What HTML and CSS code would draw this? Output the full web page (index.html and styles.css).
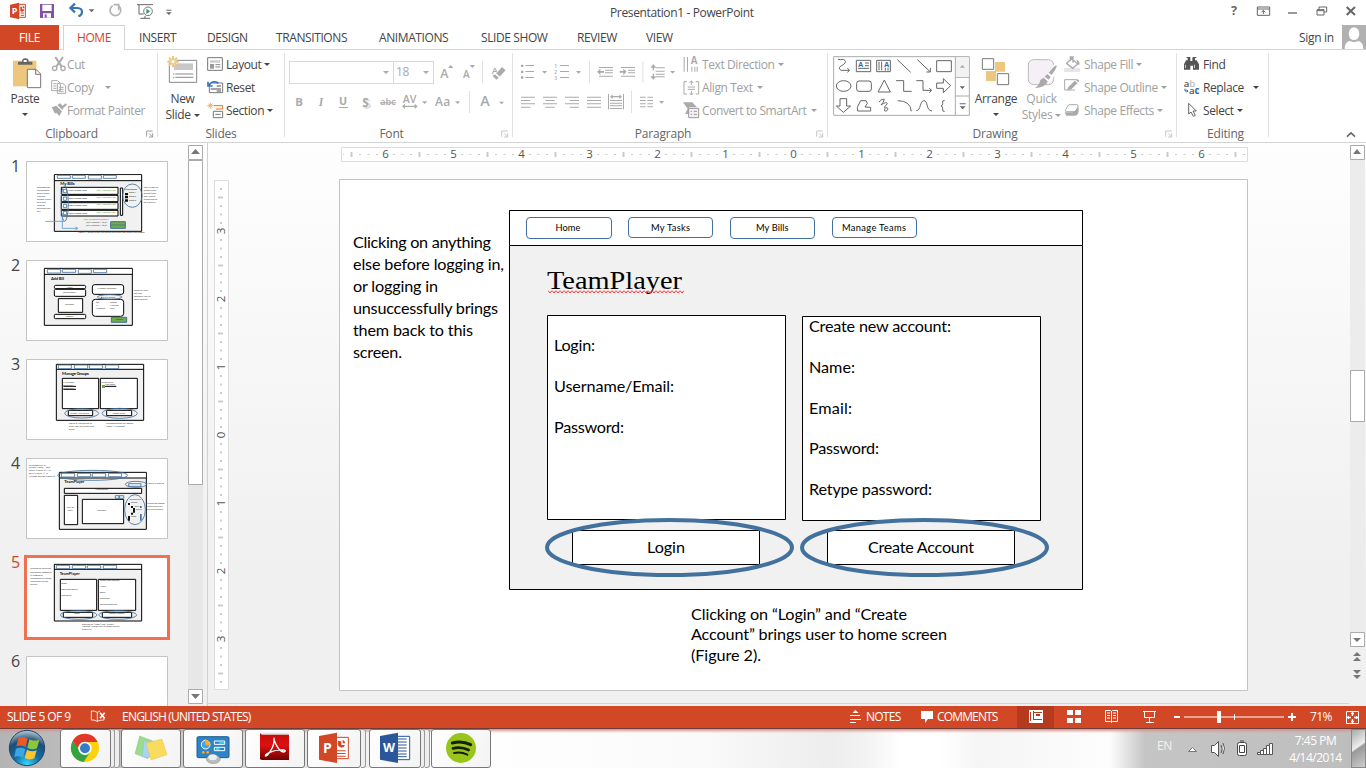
FILE: index.html
```html
<!DOCTYPE html>
<html lang="en">
<head>
<meta charset="utf-8">
<title>Presentation1 - PowerPoint</title>
<link rel="stylesheet" href="styles.css">
</head>
<body>
<div class="app">
<header class="titlebar">
  <div class="quick">
    <svg width="33" height="25" viewBox="0 0 99 75"><path fill="#d24726" d="M30 14l28-6v50l-28-6z"/><path fill="none" stroke="#d24726" stroke-width="3" d="M58 13h18v39H58M62 39h10M62 46h10"/><path fill="#d24726" d="M61 20h5v8h7a7 7 0 0 1-12 5zM68 17a8 8 0 0 1 6 8h-6z"/><text x="35" y="42" class="logo-letter" font-size="27">P</text></svg>
    <svg width="28" height="25" viewBox="99 0 84 75"><path fill="#8450a3" d="M120 12h42v42h-42z"/><path fill="#fff" d="M127 14h28v19h-28zM129 40h24v13h-24z"/><path fill="#8450a3" d="M134 43h6v10h-6z"/></svg>
    <svg width="38" height="25" viewBox="183 0 114 75"><path fill="none" stroke="#3b73b3" stroke-width="6.500" d="M225 11l-14 13 14 13M212 24h20q15 1 14 13q-1 9-11 12"/><path fill="#666" d="M266 28h17l-8 9z"/></svg>
    <svg width="30" height="25" viewBox="297 0 90 75"><path fill="none" stroke="#b3b3b3" stroke-width="5" d="M338 17a16 16 0 1 0 18 1"/><path fill="none" stroke="#b3b3b3" stroke-width="5" d="M341 14h15v17"/></svg>
    <svg width="32" height="25" viewBox="387 0 96 75"><path fill="none" stroke="#666" stroke-width="3" d="M411 14h48M417 14v28h14M435 48v7M421 55h29"/><circle cx="444" cy="34" r="13" fill="#fff" stroke="#777" stroke-width="3"/><path fill="#3b9b76" d="M439 26l12 8-12 8z"/></svg>
    <svg width="19" height="25" viewBox="483 0 57 75"><path fill="#666" d="M499 29h15v3h-15zM498 37h17l-8 8z"/></svg>
  </div>
  <h1 class="title">Presentation1 - PowerPoint</h1>
  <svg class="winbtns" width="156" height="25" viewBox="720 0 468 75"><text x="783" y="45" font-size="38" font-weight="700" fill="#666" font-family="Open Sans">?</text><g fill="none" stroke="#666" stroke-width="3"><path d="M862 21h37v25h-37zM862 27h37M880 42V31M874 37l6-6 6 6M1047 21h23v15h-23z"/><path fill="#fff" d="M1041 29h21v16h-21zM1041 32h21"/><path stroke-width="4" d="M954 39h27"/><path stroke-width="6" d="M1130 21l25 24M1155 21l-25 24"/></g></svg>
</header>
<nav class="tabs">
  <a class="tab file">FILE</a><a class="tab home">HOME</a><a class="tab t-ins">INSERT</a><a class="tab t-des">DESIGN</a><a class="tab t-tra">TRANSITIONS</a><a class="tab t-ani">ANIMATIONS</a><a class="tab t-sli">SLIDE SHOW</a><a class="tab t-rev">REVIEW</a><a class="tab">VIEW</a>
  <span class="signin">Sign in</span>
  <svg class="avatar" width="24" height="24" viewBox="0 0 72 72"><path fill="#b1b1b1" d="M0 0h72v72H0z"/><ellipse cx="36" cy="26" rx="16" ry="19" fill="#fff"/><path fill="#fff" d="M8 72q0-20 14-24l14 4 14-4q14 4 14 24z"/></svg>
</nav>
<section class="ribbon">
  <div class="group g-clip">
    <div class="tools">
      <div class="big paste"><svg width="50" height="37" viewBox="0 159 150 111"><path fill="#edc77d" d="M39 182h70v77H39z"/><path fill="#666" d="M54 194v-9h12q0-10 10-10t10 10h11v9z"/><path fill="#fff" d="M71 180h9v6h-9z"/><path fill="#fff" stroke="#777" stroke-width="3" d="M82 208h26l14 14v41H82zM107 208v15h15"/></svg><span>Paste</span><i class="caret"></i></div>
      <div class="col off">
        <div class="cmd"><svg width="18" height="23" viewBox="144 159 54 69"><g fill="none" stroke="#aaa" stroke-width="4"><circle cx="158" cy="205" r="6.500"/><circle cx="183" cy="205" r="6.500"/><path stroke-width="6" d="M160 171l19 29M183 171l-20 29"/></g></svg><span>Cut</span></div>
        <div class="cmd"><svg width="18" height="23" viewBox="144 228 54 69"><path fill="#fff" stroke="#aaa" stroke-width="3" d="M149 242h18l8 8v22h-26zM166 250h16l9 8v22h-25zM154 251h9M154 258h9M154 265h9M171 262h14M171 268h14M171 274h14"/></svg><span class="copy">Copy</span><i class="caret"></i></div>
        <div class="cmd"><svg width="18" height="23" viewBox="144 297 54 69"><path fill="#aaa" d="M149 322l14-5 17 17-8 14-9-10-4 3zM166 315l8-5 12 11-5 9zM182 317l9-7 4 5-9 7z"/></svg><span>Format Painter</span></div>
      </div>
    </div>
    <div class="glabel"><span>Clipboard</span><svg class="launch" width="8" height="8" viewBox="0 0 24 24"><path fill="none" stroke="#888" stroke-width="2.500" d="M2 20V3h18M9 10l10 10M20 10v11H9"/></svg></div>
  </div>
  <div class="group g-slides">
    <div class="tools">
      <div class="big"><svg width="49" height="37" viewBox="474 159 147 111"><path fill="#fff" stroke="#888" stroke-width="3" d="M508 181h82v66h-82z"/><path fill="#c9c9c9" d="M522 190h57v20h-57z"/><path stroke="#888" stroke-width="3" stroke-dasharray="4 3 60" d="M519 222h61M519 232h61"/><circle cx="519" cy="185" r="11" fill="#fff"/><path stroke="#edc77d" stroke-width="6" d="M519 168v34M502 185h34M507 173l24 24M531 173l-24 24"/><circle cx="519" cy="185" r="5" fill="#fff"/></svg><span>New<br>Slide <i class="caret"></i></span></div>
      <div class="col">
        <div class="cmd"><svg width="19" height="23" viewBox="618 159 57 69"><path fill="#fff" stroke="#777" stroke-width="3" d="M623 173h44v38h-44z"/><path fill="#c9c9c9" d="M630 181h30v7h-30z"/><path fill="#999" d="M630 192h12v14h-12z"/><path stroke="#888" stroke-width="3" d="M646 194h15M646 201h15"/></svg><span>Layout</span><i class="caret"></i></div>
        <div class="cmd"><svg width="19" height="23" viewBox="618 228 57 69"><path fill="#fff" stroke="#777" stroke-width="3" d="M628 249h40v29h-40z"/><path stroke="#888" stroke-width="4" d="M650 258h13M632 267h31M650 273h13"/><path fill="none" stroke="#fff" stroke-width="9" d="M626 257q9-17 26-12"/><path fill="none" stroke="#3b73b3" stroke-width="5" d="M626 256q12-17 29-7M624 245v13h14"/></svg><span>Reset</span></div>
        <div class="cmd"><svg width="19" height="23" viewBox="618 297 57 69"><path fill="none" stroke="#e07628" stroke-width="3" d="M641 317h27v10h-20"/><path fill="#fff" stroke="#777" stroke-width="3" d="M640 334h28v19h-28zM646 343h16"/><path stroke="#edb666" stroke-width="3" d="M631 308v18M622 317h18M625 311l12 12M637 311l-12 12"/></svg><span>Section</span><i class="caret"></i></div>
      </div>
    </div>
    <div class="glabel"><span>Slides</span></div>
  </div>
  <div class="group g-font off">
    <div class="tools stack">
      <div class="row"><div class="combo face"><i class="caret"></i></div><div class="combo size"><span>18</span><i class="caret"></i></div>
        <svg width="24" height="30" viewBox="462 171 72 90"><text x="478" y="235" font-size="37">A</text><path d="M501 204h16l-8-9z"/></svg><svg width="24" height="30" viewBox="534 171 72 90"><text x="546" y="235" font-size="30">A</text><path d="M566 195h16l-8 9z"/><path class="sep" d="M603 183h3v66h-3z"/></svg><svg width="26" height="30" viewBox="606 171 78 90"><text x="632" y="221" font-size="28">A</text><path stroke="#fff" stroke-width="2" d="M645 220l18-20 12 11-19 20zM633 227l9-5 13 12-9 6z"/></svg></div>
      <div class="row"><svg width="25" height="31" viewBox="15 264 75 93"><text x="46" y="321" font-size="34" class="heavy">B</text></svg><svg width="23" height="31" viewBox="90 264 69 93"><text x="116" y="321" class="ital">I</text></svg><svg width="23" height="31" viewBox="159 264 69 93"><text x="177" y="319" font-size="32" class="heavy">U</text><path d="M177 324h27v3h-27z"/></svg><svg width="23" height="31" viewBox="228 264 69 93"><path fill="none" stroke="#ddd" stroke-width="6" d="M270 305q-16-5-14 5q16 5 14 12q-5 8-17 3"/><text x="247" y="323" font-size="35" class="heavy">S</text></svg><svg width="22" height="31" viewBox="297 264 66 93"><text x="301" y="319" font-size="27" textLength="46">abc</text><path d="M300 310h49v3h-49z"/></svg><svg width="33" height="31" viewBox="363 264 99 93"><text x="368" y="313" font-size="32" textLength="41">AV</text><path d="M366 322l9-8v6h29v-6l9 8-9 8v-6h-29v6zM426 307h15l-7 8z"/></svg><svg width="36" height="31" viewBox="462 264 108 93"><text x="465" y="320" font-size="36" textLength="46">Aa</text><path d="M525 307h15l-7 8z"/><path class="sep" d="M567 276h3v66h-3z"/></svg><svg width="40" height="31" viewBox="570 264 120 93"><text x="601" y="322" font-size="43" textLength="30">A</text><path d="M657 308h15l-7 8z"/></svg></div>
    </div>
    <div class="glabel"><span>Font</span><svg class="launch" width="8" height="8" viewBox="0 0 24 24"><path fill="none" stroke="#bbb" stroke-width="2.500" d="M2 20V3h18M9 10l10 10M20 10v11H9"/></svg></div>
  </div>
  <div class="group g-para off">
    <div class="tools">
      <div class="stack">
        <div class="row"><svg width="34" height="30" viewBox="699 171 102 90"><path d="M723 194h7v7h-7zM723 212h7v7h-7zM723 229h7v7h-7zM736 195h26v3h-26zM736 213h26v3h-26zM736 231h26v3h-26zM786 213h15l-7 8z"/></svg><svg width="43" height="30" viewBox="801 171 129 90"><text x="823" y="203" font-size="15">1</text><text x="823" y="221" font-size="15">2</text><text x="823" y="239" font-size="15">3</text><path d="M840 195h27v3h-27zM840 213h27v3h-27zM840 231h27v3h-27zM888 213h15l-7 8z"/><path class="sep" d="M927 183h3v66h-3z"/></svg><svg width="29" height="30" viewBox="930 171 87 90"><path d="M957 201h42v3h-42zM975 209h24v3h-24zM975 217h24v3h-24zM957 227h42v3h-42zM951 215l10-9v7h11v5h-11v7z"/></svg><svg width="25" height="30" viewBox="-3 1 75 90"><path d="M3 31h42v3H3zM24 39h21v3H24zM24 47h21v3H24zM3 57h42v3H3zM20 45L10 36v7H-1v5h11v7z"/><path class="sep" d="M67 33h3v66h-3z" transform="translate(0 -20)"/></svg><svg width="36" height="30" viewBox="72 21 108 90"><path d="M107 52h27v3h-27zM107 62h27v3h-27zM107 71h27v3h-27zM107 79h27v3h-27zM91 53l9-10 9 10h-7v8h-4v-8zM91 79l9 10 9-10h-7v-8h-4v8zM150 63h15l-7 8z"/></svg></div>
        <div class="row"><svg width="29" height="31" viewBox="699 264 87 93"><path d="M723 293h42v3h-42zM723 303h28v3h-28zM723 313h42v3h-42zM723 323h28v3h-28z"/></svg><svg width="22" height="31" viewBox="786 264 66 93"><path d="M789 293h42v3h-42zM796 303h28v3h-28zM789 313h42v3h-42zM796 323h28v3h-28z"/></svg><svg width="22" height="31" viewBox="852 264 66 93"><path d="M855 293h42v3h-42zM869 303h28v3h-28zM855 313h42v3h-42zM869 323h28v3h-28z"/></svg><svg width="22" height="31" viewBox="918 264 66 93"><path d="M921 293h42v3h-42zM921 303h42v3h-42zM921 313h42v3h-42zM921 323h42v3h-42z"/></svg><svg width="24" height="31" viewBox="984 264 72 93"><path d="M984 285h3v46h-3zM1029 285h3v46h-3zM990 303h36v3h-36zM990 311h36v3h-36zM990 319h36v3h-36zM990 327h36v3h-36zM990 293l8-7v5h20v-5l8 7-8 7v-5h-20v5z"/></svg><svg width="37" height="31" viewBox="36 114 111 93"><path class="sep" d="M33 126h3v66h-3z"/><path d="M60 143h17v3H60zM60 153h17v3H60zM60 163h17v3H60zM60 172h17v3H60zM82 143h17v3H82zM82 153h17v3H82zM82 163h17v3H82zM82 172h17v3H82zM117 156h15l-7 8z"/></svg></div>
      </div>
      <div class="col">
        <div class="cmd"><svg width="19" height="23" viewBox="185 9 57 69"><path d="M190 21h3v44h-3zM200 21h3v44h-3zM213 50h3v15h-3zM222 50h3v15h-3zM229 50h3v15h-3z"/><text x="211" y="42" font-size="29" class="heavy">A</text></svg><span>Text Direction</span><i class="caret"></i></div>
        <div class="cmd"><svg width="19" height="23" viewBox="185 78 57 69"><path fill="none" stroke="#aaa" stroke-width="3" d="M200 95h-9v37h9M226 95h9v37h-9M202 111h22M202 118h22M213 92v13M207 99l6-6 6 6M213 123v12M207 129l6 6 6-6"/></svg><span>Align Text</span><i class="caret"></i></div>
        <div class="cmd"><svg width="19" height="23" viewBox="185 147 57 69"><path d="M188 157h28l14 15h-24v20h-12l8-16z"/><path fill="#f5f0f6" stroke="#999" stroke-width="3" d="M205 175h30v28h-30zM211 184h4M220 184h10M211 193h4M220 193h10"/></svg><span>Convert to SmartArt</span><i class="caret"></i></div>
      </div>
    </div>
    <div class="glabel"><span>Paragraph</span><svg class="launch" width="8" height="8" viewBox="0 0 24 24"><path fill="none" stroke="#bbb" stroke-width="2.500" d="M2 20V3h18M9 10l10 10M20 10v11H9"/></svg></div>
  </div>
  <div class="group g-draw">
    <div class="tools">
      <svg class="gallery" width="137" height="60" viewBox="639 18 411 180"><path fill="#fff" stroke="#ababab" stroke-width="3" d="M641 20h407v176H641zM1006 20v176M1006 82h42M1006 138h42"/><path fill="#f2f2f2" d="M1008 22h38v58h-38z"/><g fill="none" stroke="#666" stroke-width="3"><path d="M654 28q8 2 16 0q13 6 0 16q-20 9-7 17h25M682 55l7 6-7 6"/><path d="M709 31h43v34h-43zM735 39h12M735 47h12M714 55h33M770 31h41v34h-41zM777 35v26M785 35v26M796 53v9M804 53v9M832 29l40 38M892 29l38 36M931 54v12h-12M950 32h44v33h-44z"/><ellipse cx="671" cy="108" rx="22" ry="16"/><rect x="710" y="93" width="44" height="31" rx="7"/><path d="M793 90l18 36h-37zM828 92h23v32h24M889 92h20v29h25M928 115l7 6-7 7M950 99h20v-13l22 21-22 21v-13h-20zM660 146h20v22h12l-22 19-21-19h11zM712 172l10-20h16l4 8-7 11 17 1v11h-39zM777 156q10-12 16-8q-2 9-10 17q17-12 19-4q-14 15-6 13q13-3 4 9q-10 2-5-7M833 152q38 0 41 32M889 182c14 0 10-30 23-30s5 30 24 31M974 151q-9-1-6 10q0 6-5 7q6 1 5 8q-2 9 6 9"/></g><g fill="#2b68ad" font-family="Liberation Sans" font-weight="700" font-size="22"><text x="714" y="50">A</text><text x="792" y="51">A</text></g><path fill="#ababab" d="M1019 53h16l-8-8z"/><path fill="#666" d="M1019 109h16l-8 8zM1019 160h18v3h-18zM1019 169h18l-9 9z"/></svg>
      <div class="big arrange"><svg width="48" height="37" viewBox="6 159 144 111"><path fill="#edc77d" d="M75 186h30v29H75zM48 213h30v30H48z"/><path fill="#fff" stroke="#777" stroke-width="3" d="M37 176h34v32H37zM82 221h34v33H82z"/></svg><span>Arrange</span><i class="caret"></i></div>
      <div class="big quickst off"><svg width="43" height="37" viewBox="150 159 129 111"><rect x="175" y="179" width="76" height="75" rx="16" fill="#f5f0f6" stroke="#bbb" stroke-width="3"/><path stroke="#fff" stroke-width="20" d="M262 196l-32 48"/><path d="M259 196q5 4-14 29l-9-7q20-24 23-22zM232 222l10 8-6 9-12-9zM221 233l12 11q-6 20-39 20 15-9 17-24z"/></svg><span>Quick<br>Styles <i class="caret"></i></span></div>
      <div class="col off">
        <div class="cmd"><svg width="22" height="23" viewBox="285 159 66 69"><path fill="#e9e4e9" d="M288 204h48v12h-48z"/><path fill="none" stroke="#aaa" stroke-width="4" d="M296 190l15-15 18 17-15 13zM307 184v-13h8v17"/><path d="M325 179q12 3 9 17l-5-5z"/></svg><span>Shape Fill</span><i class="caret"></i></div>
        <div class="cmd"><svg width="22" height="23" viewBox="285 228 66 69"><path fill="none" stroke="#aaa" stroke-width="3" d="M325 239h-35v31h31"/><path d="M301 261l19-19 9 7-19 19-13 3zM323 240l5-3 6 5-3 5z"/></svg><span>Shape Outline</span><i class="caret"></i></div>
        <div class="cmd"><svg width="22" height="23" viewBox="285 297 66 69"><path fill="#fff" stroke="#aaa" stroke-width="3" d="M306 314h20q6 0 4 6l-5 11q-2 4-7 4h-22q-5 0-3-6l6-11q2-4 7-4z"/><path d="M332 321v12q-2 14-10 14h-27l-5-10h24q5 0 8-6z"/></svg><span>Shape Effects</span><i class="caret"></i></div>
      </div>
    </div>
    <div class="glabel"><span>Drawing</span><svg class="launch" width="8" height="8" viewBox="0 0 24 24"><path fill="none" stroke="#bbb" stroke-width="2.500" d="M2 20V3h18M9 10l10 10M20 10v11H9"/></svg></div>
  </div>
  <div class="group g-edit">
    <div class="tools"><div class="col">
      <div class="cmd"><svg width="20" height="23" viewBox="639 159 60 69"><path fill="#555" d="M648 181h5v-7h8v9h6v-9h8v7h5l7 12v16h-18v-12h-8v12h-19v-16zM650 171h11v3h-11zM668 171h11v3h-11z"/><path fill="#fff" d="M646 194h2v10h-2zM673 194h2v10h-2z"/></svg><span>Find</span></div>
      <div class="cmd"><svg width="20" height="23" viewBox="639 228 60 69"><g font-family="Open Sans" font-size="29" font-weight="600"><text x="641" y="260" fill="#555">a<tspan fill="#bbb">b</tspan></text><text x="657" y="282" fill="#555">a<tspan fill="#2b68ad" font-weight="700">c</tspan></text></g><path fill="none" stroke="#2b68ad" stroke-width="3" d="M645 266v7h9M650 269l4 4-4 4"/></svg><span class="replace">Replace</span><i class="caret"></i></div>
      <div class="cmd"><svg width="20" height="23" viewBox="639 297 60 69"><path fill="#fff" stroke="#666" stroke-width="3" d="M656 310v32l7-6 7 13 6-3-7-13h10z"/></svg><span>Select</span><i class="caret"></i></div>
    </div></div>
    <div class="glabel"><span>Editing</span></div>
  </div>
  <svg class="collapse" width="10" height="7" viewBox="0 0 30 21"><path fill="none" stroke="#666" stroke-width="5" d="M3 17L15 6l12 11"/></svg>
</section>
<main class="work">
  <aside class="pane">
    <ol class="thumbs">
      <li><b>1</b><svg class="thumb" width="142" height="81" viewBox="78 48 426 243"><path class="page" d="M79.500 49.500h423v240h-423z"/><path class="fr" d="M163 89h262v170H163z"/><path fill="#fff" d="M165 91h258v15H165z"/><path class="k" d="M163 107h262"/><path class="k w" d="M184 127h170v21H184zM184 151h170v19H184zM184 173h170v20H184zM184 196h170v17H184zM361 129h7v82h-7z"/><g class="bl"><path d="M172 91h39v9h-39zM217 91h39v9h-39zM265 91h39v11h-39zM310 91h39v9h-39zM190 133h10v10h-10zM190 156h10v10h-10zM190 178h10v10h-10zM190 199h10v10h-10z"/><ellipse cx="194" cy="176" rx="11" ry="53"/><ellipse cx="397" cy="152" rx="29" ry="35"/></g><path class="arrow" d="M136 229h58M187 204v46h45M226 246l8 4-8 4"/><path class="gr" d="M332 230h44v20h-44z"/><path class="bl" d="M332 240h44"/><path fill="#111" d="M375 144h9v7h-9zM375 153h9v7h-9zM375 163h9v7h-9z"/><text x="181" y="120" font-size="13" font-weight="700" textLength="43">My Bills</text><g class="tiny"><text x="111" y="128">Selecting any</text><text x="111" y="137">outstanding</text><text x="111" y="146">check boxes</text><text x="111" y="155">and one</text><text x="111" y="164">choose which</text><text x="111" y="173">bills they</text><text x="111" y="182">want to</text><text x="111" y="191">calculate and</text><text x="111" y="200">pay</text><text x="431" y="129">User is able to</text><text x="431" y="138">select which</text><text x="431" y="147">group(s) bills</text><text x="431" y="156">they would</text><text x="431" y="165">want them to</text><text x="431" y="174">be a part of.</text><text x="203" y="138" textLength="58">Name • Creator • Due</text><text x="203" y="161" textLength="58">Name • Creator • Due</text><text x="203" y="184" textLength="58">Name • Creator • Due</text><text x="203" y="207" textLength="58">Name • Creator • Due</text><g><text x="288" y="137" textLength="58">Your Amount: $0</text><text x="288" y="159" textLength="58">Your Amount: $0</text><text x="288" y="181" textLength="58">Your Amount: $0</text><text x="288" y="203" textLength="58">Your Amount: $0</text><text x="250" y="224" textLength="76">Your Payment Summary</text></g><text x="257" y="234" textLength="64">Your Amount: 1 (0/5)</text><text x="257" y="243" textLength="64">Your Amount: 1 (0/5)</text><text x="375" y="135" textLength="36">Choose groups</text><text x="386" y="143" textLength="22">Group 1</text><text x="386" y="157" textLength="22">Group 2</text><text x="386" y="167" textLength="22">Group 3</text><text x="235" y="264" textLength="199">Figure 1: Select all bills you would like to pay and hit pay now button</text></g></svg></li>
      <li><b>2</b><svg class="thumb" width="142" height="81" viewBox="78 345 426 243"><path class="page" d="M79.500 346.500h423v240h-423z"/><path class="fr" d="M133 370h264v171H133z"/><path fill="#fff" d="M135 372h260v15H135z"/><path class="k" d="M133 388h264"/><path class="k w" d="M175 461h73v41h-73z"/><g class="k w"><rect x="163" y="421" width="94" height="10" rx="4"/><rect x="163" y="433" width="94" height="21" rx="4"/><rect x="163" y="508" width="94" height="13" rx="3"/><rect x="277" y="419" width="94" height="29" rx="7"/><rect x="277" y="463" width="94" height="51" rx="9"/></g><g class="bl"><path d="M142 373h40v11h-40zM187 373h40v9h-40zM235 373h39v12h-39zM280 373h40v10h-40z"/><ellipse cx="329" cy="456" rx="37" ry="7"/></g><path class="gr" d="M334 517h46v15h-46z"/><text x="153" y="405" font-size="12" font-weight="700" textLength="39">Add Bill</text><g class="tiny"><text x="199" y="429">Name</text><text x="190" y="443" textLength="37">Description</text><text x="195" y="480">Calendar</text><text x="195" y="515">Amount</text><text x="292" y="431" textLength="57">Member Selection</text><text x="303" y="458" textLength="42">■ Save group</text><text x="287" y="474">Joe</text><text x="287" y="483">Al</text><text x="287" y="492">Members</text><text x="330" y="474">Rooms</text><text x="330" y="483">Housing</text><text x="330" y="492">Cars</text><text x="347" y="526">Submit</text><text x="401" y="438">Select to view</text><text x="401" y="447">and edit</text><text x="401" y="456">members' bills in</text><text x="401" y="465">same amount</text></g></svg></li>
      <li><b>3</b><svg class="thumb" width="142" height="81" viewBox="78 42 426 243"><path class="page" d="M79.500 43.500h423v240h-423z"/><path class="fr" d="M169 58h262v168H169z"/><path fill="#fff" d="M171 60h258v12H171z"/><path class="k" d="M169 73h262"/><path class="k w" d="M187 100h109v91H187zM301 100h111v91H301zM205 196h73v16h-73zM320 196h75v16h-75z"/><g class="bl"><path d="M175 60h39v11h-39zM223 60h40v11h-40zM268 60h40v11h-40zM316 60h40v11h-40z"/><ellipse cx="245" cy="205" rx="51" ry="14"/><ellipse cx="359" cy="205" rx="53" ry="15"/></g><path class="k" d="M190 124h38M190 133h38M315 124h34"/><path fill="#70ad47" d="M306 120h9v9h-9z"/><text x="186" y="90" font-size="13" font-weight="700" textLength="81">Manage Groups</text><g class="tiny"><text x="189" y="114">My groups:</text><text x="189" y="122">Team one</text><text x="189" y="131">Group two</text><text x="304" y="113">Invite to TP:</text><text x="315" y="121">Add email</text><text x="211" y="206" textLength="56">Create New Group</text><text x="336" y="206" textLength="39">Accept Invite</text><text x="206" y="237" textLength="70">Figure 3: edit group to</text><text x="206" y="246" textLength="76">allow user to create new</text><text x="206" y="255">group</text><text x="319" y="237" textLength="81">Selecting group will appear</text><text x="319" y="246">under “My groups”</text></g></svg></li>
      <li><b>4</b><svg class="thumb" width="142" height="81" viewBox="78 339 426 243"><path class="page" d="M79.500 340.500h423v240h-423z"/><path class="fr" d="M178 382h261v171H178z"/><path fill="#fff" d="M180 384h257v14H180z"/><path class="k" d="M178 399h261"/><path class="k w" d="M193 430h232v15H193zM193 451h40v88h-40zM247 463h124v73H247z"/><g class="bl"><path d="M184 385h40v11h-40zM232 385h40v10h-40zM277 385h40v11h-40zM325 385h40v10h-40zM346 452h11v8h-11zM358 452h13v8h-13zM386 416h37v8h-37z"/><ellipse cx="278" cy="391" rx="105" ry="15"/><ellipse cx="408" cy="418" rx="32" ry="9"/><ellipse cx="405" cy="494" rx="31" ry="45"/></g><path fill="#111" d="M384 474h6v6h-6zM393 483h6v6h-6zM399 489h6v14h-6zM393 503h6v6h-6zM384 513h6v14h-6z"/><path fill="#41719c" d="M420 483h5v6h-5zM420 507h5v20h-5z"/><text x="193" y="413" font-size="12" font-weight="700" textLength="60">TeamPlayer</text><g class="tiny"><text x="87" y="362" textLength="50">Selecting any in</text><text x="87" y="370" textLength="64">navbar (Home = this)</text><text x="87" y="379" textLength="66">Tasks (Figure 2), My</text><text x="87" y="387" textLength="57">Bills (Figure 1), &amp;</text><text x="87" y="395" textLength="78">Manage Groups (Figure 3)</text><text x="285" y="436">Notifications</text><text x="199" y="488">Your To</text><text x="204" y="497">Do’s</text><text x="291" y="498">Calendar</text><text x="386" y="465" textLength="37">Housing info</text><text x="393" y="474">Group</text><text x="405" y="485">Bills</text><text x="407" y="496">Chore</text><text x="393" y="516">Food</text><text x="442" y="417" textLength="50">Figure 5: pop up</text><text x="442" y="476" textLength="52">Shows list needed</text><text x="442" y="485">within they are</text><text x="442" y="494">on the calendar</text></g></svg></li>
      <li class="sel"><b>5</b><svg class="thumb" width="146" height="85" viewBox="72 45 438 255"><path fill="#fff" d="M78 50h426v243H78z"/><path class="fr" d="M163 73h262v170H163z"/><path fill="#fff" d="M165 75h258v12H165z"/><path class="k" d="M163 88h262"/><path class="k w" d="M181 118h109v93H181zM295 118h112v93H295zM190 217h88v15h-88zM307 217h88v15h-88z"/><g class="bl"><path d="M169 76h40v10h-40zM217 76h40v10h-40zM262 76h40v10h-40zM310 76h40v10h-40z"/><ellipse cx="236" cy="225" rx="55" ry="13"/><ellipse cx="353" cy="225" rx="57" ry="13"/></g><text x="179" y="105" font-size="12" font-weight="700" textLength="60">TeamPlayer</text><g class="tiny"><text x="91" y="88" textLength="61">Clicking on anything</text><text x="91" y="99" textLength="65">else before logging in,</text><text x="91" y="108">or logging in</text><text x="91" y="117" textLength="63">unsuccessfully brings</text><text x="91" y="126">them back to this</text><text x="91" y="135">screen.</text><text x="183" y="131">Login:</text><text x="183" y="149" textLength="51">Username/Email:</text><text x="183" y="167">Password:</text><text x="299" y="124" textLength="60">Create new account:</text><text x="299" y="140">Name:</text><text x="299" y="158">Email:</text><text x="299" y="176">Password:</text><text x="299" y="194" textLength="53">Retype password:</text><text x="222" y="223">Login</text><text x="327" y="223" textLength="46">Create Account</text><text x="245" y="254" textLength="96">Clicking on “Login” and “Create</text><text x="245" y="262" textLength="113">Account” brings user to home screen</text><text x="245" y="270">(Figure 2).</text></g><path fill="none" stroke="#f0704f" stroke-width="9" d="M76.500 49.500h429v246h-429z"/></svg></li>
      <li><b>6</b><svg class="thumb" width="142" height="81" viewBox="78 348 426 243"><path class="page" d="M79.500 349.500h423v240h-423z"/></svg></li>
    </ol>
    <svg class="pscroll" width="16" height="560" viewBox="188 145 16 560"><path fill="#e7e7e7" d="M188 159h15v531h-15z"/><path class="sb" d="M188.500 145.500h14v14h-14zM188.500 160.500h14v324h-14zM188.500 689.500h14v14h-14z"/><path fill="#777" d="M191 154h9l-4.500-5zM191 694h9l-4.500 5z"/></svg>
  </aside>
  <section class="stage">
    <svg class="hruler" width="907" height="15" viewBox="341 147 907 15"><defs><pattern id="h" x="793.5" y="147" width="68" height="15" patternUnits="userSpaceOnUse"><path fill="#999" d="M8 7h1v1H8zM16.500 7h1v1h-1zM25 7h1v1h-1zM33.500 5h1v5h-1zM42 7h1v1h-1zM50.500 7h1v1h-1zM59 7h1v1h-1z"/></pattern></defs><path fill="#fff" stroke="#dcdcdc" d="M341.500 147.500h906v14h-906z"/><path fill="url(#h)" d="M343 148h903v13H343z"/><g class="rnum"><text x="385.500" y="158">6</text><text x="453.500" y="158">5</text><text x="521.500" y="158">4</text><text x="589.500" y="158">3</text><text x="657.500" y="158">2</text><text x="725.500" y="158">1</text><text x="793.500" y="158">0</text><text x="861.500" y="158">1</text><text x="929.500" y="158">2</text><text x="997.500" y="158">3</text><text x="1065.500" y="158">4</text><text x="1133.500" y="158">5</text><text x="1201.500" y="158">6</text></g></svg>
    <div class="board">
    <svg class="vruler" width="15" height="511" viewBox="214 180 15 511"><defs><pattern id="v" x="214" y="435.5" width="15" height="68" patternUnits="userSpaceOnUse"><path fill="#999" d="M6 8h2v1H6zM6 16.500h2v1H6zM6 25h2v1H6zM4 33.500h5v1H4zM6 42h2v1H6zM6 50.500h2v1H6zM6 59h2v1H6z"/></pattern></defs><path fill="#fff" stroke="#dcdcdc" d="M214.500 180.500h14v509h-14z"/><path fill="url(#v)" d="M215 182h13v506h-13z"/><g class="rnum"><text transform="translate(225 231)rotate(-90)">3</text><text transform="translate(225 299)rotate(-90)">2</text><text transform="translate(225 367)rotate(-90)">1</text><text transform="translate(225 435)rotate(-90)">0</text><text transform="translate(225 503)rotate(-90)">1</text><text transform="translate(225 571)rotate(-90)">2</text><text transform="translate(225 639)rotate(-90)">3</text></g></svg>
    <svg class="slide" width="909" height="512" viewBox="339 179 909 512">
      <defs><pattern id="sq" x="548" y="290" width="4" height="4" patternUnits="userSpaceOnUse"><path fill="none" stroke="#f33" d="M0 .5l2 2.500 2-2.500"/></pattern></defs>
      <path fill="#fff" stroke="#c3c3c3" d="M339.500 179.500h908v511h-908z"/>
      <g stroke="#000"><path fill="#f1f1f1" d="M509.500 210.500h573v379h-573z"/><path fill="#fff" d="M509.500 210.500h573v35h-573zM547.500 315.500h238v204h-238zM802.500 316.500h238v204h-238zM572.500 530.500h187v34h-187zM827.500 530.500h187v34h-187z"/></g>
      <g fill="#fff" stroke="#41719c"><rect x="526.500" y="217.500" width="85" height="21" rx="3.500"/><rect x="628.500" y="217.500" width="84" height="20" rx="3.500"/><rect x="730.500" y="217.500" width="84" height="21" rx="3.500"/><rect x="832.500" y="217.500" width="84" height="20" rx="3.500"/></g>
      <g fill="none" stroke="#41719c" stroke-width="4"><ellipse cx="669.500" cy="547.500" rx="122.500" ry="27.500"/><ellipse cx="924.500" cy="547.500" rx="122.500" ry="27.500"/></g>
      <g class="nav"><text x="555.500" y="231" textLength="25">Home</text><text x="651" y="231" textLength="39">My Tasks</text><text x="756" y="231" textLength="32.500">My Bills</text><text x="842" y="231" textLength="64">Manage Teams</text></g>
      <text x="547" y="289" class="brand" textLength="135" lengthAdjust="spacingAndGlyphs">TeamPlayer</text><path fill="url(#sq)" d="M548 290h136v4H548z"/>
      <g class="body"><text x="353" y="248" textLength="138">Clicking on anything</text><text x="353" y="270" textLength="151">else before logging in,</text><text x="353" y="292" textLength="85">or logging in</text><text x="353" y="314" textLength="145">unsuccessfully brings</text><text x="353" y="336" textLength="120">them back to this</text><text x="353" y="358" textLength="49">screen.</text>
      <text x="554" y="351" textLength="41">Login:</text><text x="554" y="392" textLength="120">Username/Email:</text><text x="554" y="433" textLength="70">Password:</text>
      <text x="809" y="332" textLength="142">Create new account:</text><text x="809" y="373" textLength="46">Name:</text><text x="809" y="414" textLength="43">Email:</text><text x="809" y="454" textLength="70">Password:</text><text x="809" y="495" textLength="123">Retype password:</text>
      <text x="647" y="553" textLength="38">Login</text><text x="868" y="553" textLength="106">Create Account</text>
      <text x="691" y="620" textLength="216">Clicking on “Login” and “Create</text><text x="691" y="640" textLength="256">Account” brings user to home screen</text><text x="691" y="661" textLength="70">(Figure 2).</text></g>
    </svg>
    </div>
  </section>
  <svg class="vscroll" width="17" height="560" viewBox="1349 143 17 560"><path fill="#ececec" d="M1350 159h15v475h-15z"/><path class="sb" d="M1350.500 145.500h14v14h-14zM1350.500 370.500h14v51h-14zM1350.500 632.500h14v14h-14z"/><path fill="#777" d="M1353 154h8l-4-5zM1353 638h8l-4 4zM1353 656h8l-4-4zM1353 661h8l-4-4zM1353 670h8l-4 4zM1353 675h8l-4 4z"/></svg>
</main>
<footer class="status">
  <span class="s-slide">SLIDE 5 OF 9</span>
  <svg width="31" height="22" viewBox="261 498 93 66"><path fill="none" stroke="#fff" stroke-width="2.500" d="M292 517q-9-5-18-4v27q9-1 18 4zM292 517l8-4M292 544q6-4 20-4v-6"/><path stroke="#fff" stroke-width="5" d="M300 518l14 17M314 518l-14 17"/></svg>
  <span class="s-lang">ENGLISH (UNITED STATES)</span>
  <svg class="push" width="18" height="22" viewBox="848 706 18 22"><path fill="#fff" d="M850 715h10v1h-10zM850 719h11v1h-11zM850 722h6v1h-6zM852.500 713h6l-3-3z"/></svg><span class="s-notes">NOTES</span>
  <svg width="16" height="22" viewBox="920 706 16 22"><path fill="#fff" d="M921 711h12v8h-5l-3 4v-4h-4z"/></svg><span class="s-com">COMMENTS</span>
  <svg class="normal" width="37" height="22" viewBox="1017 706 37 22"><path fill="#fff" d="M1029 710h14v13h-14z"/><path fill="#b63a1d" d="M1030 712h1v9h-1zM1033 711h1v9h-1zM1034 712h8v1h-8zM1036 714h4v2h-4zM1033 719h9v1h-9z"/></svg>
  <svg width="38" height="22" viewBox="1054 706 38 22"><path fill="#fff" d="M1067 710h6v5h-6zM1075 710h6v5h-6zM1067 718h6v5h-6zM1075 718h6v5h-6z"/></svg>
  <svg width="38" height="22" viewBox="1092 706 38 22"><path fill="none" stroke="#fff" d="M1105.500 710.500h5l1 1 1-1h5v11h-5l-1 1-1-1h-5zM1111.500 711v12M1107 713h3M1107 715.500h3M1107 718h3M1113 713h3M1113 715.500h3M1113 718h3"/></svg>
  <svg width="38" height="22" viewBox="1130 706 38 22"><path fill="none" stroke="#fff" d="M1143 711.500h13M1144.500 711v6.500h10V711M1149.500 718v4M1146 722.500h8"/></svg>
  <svg width="136" height="22" viewBox="1168 706 136 22"><path fill="#fff" d="M1174 716h6v2h-6zM1184 716.500h100v1h-100zM1217 711h4v12h-4zM1234 714h1v6h-1zM1288 716h8v2h-8zM1291 713h2v8h-2z"/></svg>
  <span class="s-zoom">71%</span>
  <svg width="24" height="22" viewBox="1342 706 24 22"><path fill="none" stroke="#fff" d="M1346.500 711.500h12v12h-12z"/><path fill="none" stroke="#fff" stroke-width="1.300" d="M1352.500 712v4M1352.500 719v4M1347 717.500h4M1354 717.500h4M1351 713.500h3M1351 721.500h3M1348.500 716v3M1356.500 716v3"/></svg>
</footer>
<footer class="taskbar">
  <svg class="start" width="60" height="40" viewBox="0 564 180 120"><defs><radialGradient id="orb" cx=".5" cy=".95" r=".9"><stop offset="0" stop-color="#35d6ff"/><stop offset=".4" stop-color="#126fa8"/><stop offset=".75" stop-color="#1c4d76"/><stop offset="1" stop-color="#9db9cb"/></radialGradient></defs><circle cx="81" cy="621" r="53" fill="url(#orb)" stroke="#23455f" stroke-width="3"/><g transform="translate(0 -3)"><path fill="#e8592b" d="M55 594q15-7 28 2l-6 25q-13-8-28-2z"/><path fill="#8cc63e" d="M88 598q14 7 30 1l-7 26q-14 6-29-2z"/><path fill="#3fa4e2" d="M48 626q14-6 28 1l-7 26q-13-7-26-2z"/><path fill="#fdc52c" d="M81 629q14 8 29 2l-7 24q-15 7-29-1z"/></g></svg>
  <div class="tb chrome"><svg width="50" height="38" viewBox="183 570 150 114"><circle cx="255" cy="624" r="42" fill="#fdd20a"/><path fill="#e2382b" d="M218 603a42 42 0 0 1 75 3h-38q-14 0-18 14l-5 4z"/><path fill="#36a342" d="M218 603a42 42 0 0 0 33 63l20-31q-16 14-31-2z"/><circle cx="255" cy="625" r="20" fill="#fff"/><circle cx="255" cy="625" r="15" fill="#397bc4"/></svg></div><i class="edge"></i><i class="edge last"></i>
  <div class="tb notes"><svg width="58" height="38" viewBox="366 570 174 114"><path fill="#9bdc8e" stroke="#6db562" d="M419 588l38 14-13 54-39-15z"/><path fill="#a9d4f7" stroke="#83b3dc" d="M431 603l42 1-1 48-45-1z"/><path fill="#f9dc5d" stroke="#d5b640" d="M438 609l48-12 15 47-48 16z"/></svg></div>
  <div class="tb ctl"><svg width="58" height="38" viewBox="552 570 174 114"><rect x="591" y="590" width="96" height="63" rx="4" fill="#2d83c5" stroke="#1f5f94" stroke-width="3"/><circle cx="617" cy="614" r="13" fill="#4ba3de" stroke="#fff" stroke-width="3"/><path fill="#fca82e" d="M615 598a17 17 0 0 1 15 20l-14-4z"/><path fill="none" stroke="#fff" stroke-width="3" d="M643 603h31v10h-31zM643 622h31v10h-31z"/><path fill="#3bd0ef" d="M657 605h15v6h-15zM647 624h12v6h-12z"/><circle cx="610" cy="637" r="4" fill="#fca82e"/><circle cx="623" cy="637" r="4" fill="#fca82e"/><ellipse cx="640" cy="658" rx="21" ry="13" fill="#bbb" stroke="#888"/><ellipse cx="638" cy="652" rx="13" ry="9" fill="#eee"/></svg></div>
  <div class="tb adobe"><svg width="58" height="38" viewBox="138 90 174 114"><defs><linearGradient id="ad" x2="0" y2="1"><stop stop-color="#c30b0b"/><stop offset=".45" stop-color="#d11"/><stop offset="1" stop-color="#710000"/></linearGradient></defs><path fill="#e3e3e3" d="M185 98h81v8h-81z"/><path fill="url(#ad)" d="M180 99l6 5h81v76h-81l-6-2z"/><path fill="none" stroke="#fff" stroke-width="4" d="M222 113q2 22-10 39-10 17-15 16-4-3 12-11 20-9 44-7q7 3-2 6-17-3-29-37"/></svg></div>
  <div class="tb ppt"><svg width="52" height="38" viewBox="324 90 156 114"><path fill="#fff" stroke="#d24726" stroke-width="3" d="M402 112h43v64h-43z"/><path fill="#d24726" d="M414 123l10 1v11h11a11 11 0 1 1-21-8zM428 119a13 13 0 0 1 8 11h-8zM409 151h28v3h-28zM409 159h28v3h-28zM409 167h28v3h-28zM357 108l54-10v91l-54-10z"/><text class="logo-letter" x="369" y="158" font-size="42" textLength="27">P</text></svg></div><i class="edge last"></i>
  <div class="tb word"><svg width="50" height="38" viewBox="510 90 150 114"><path fill="#fff" stroke="#2b579a" stroke-width="3" d="M585 109h44v70h-44zM594 117h26M594 126h26M594 135h26M594 144h26M594 153h26M594 162h26M594 170h26"/><path fill="#2b579a" d="M540 108l54-10v91l-54-10z"/><text class="logo-letter" x="549" y="157" font-size="38" textLength="36" lengthAdjust="spacingAndGlyphs">W</text></svg></div><i class="edge"></i><i class="edge last"></i>
  <div class="tb spot"><svg width="58" height="38" viewBox="696 90 174 114"><circle cx="783" cy="144" r="45" fill="#98c51a"/><g fill="none" stroke="#161e06" stroke-linecap="round"><path stroke-width="9" d="M757 129q29-8 55 5"/><path stroke-width="8" d="M759 145q25-6 47 5"/><path stroke-width="6" d="M762 159q21-5 40 5"/></g></svg></div>
  <span class="lang">EN</span>
  <svg class="tray" width="108" height="40" viewBox="1178 729 108 40"><path fill="#fff" stroke="#777" d="M1188.500 751.500h8l-4-4z"/><path fill="#fff" stroke="#555" d="M1211.500 745.500h3l4-4v15l-4-4h-3zM1221 745q2 4 0 8M1223 743q3 5 0 11"/><rect x="1237.500" y="742.500" width="9" height="13" rx="2" fill="#fff" stroke="#444"/><path fill="#fff" stroke="#444" d="M1240 741h4M1239.500 745.500h5v7h-5z"/><path fill="#fff" stroke="#555" d="M1257.500 752.500h3v2h-3zM1260.500 750.500h3v4h-3zM1263.500 748.500h3v6h-3zM1266.500 745.500h3v9h-3zM1269.500 743.500h3v11h-3z"/></svg>
  <span class="clock">7:45 PM<br>4/14/2014</span>
  <i class="desk"></i>
</footer>
</div>
</body>
</html>
```
FILE: styles.css
```css
* { box-sizing: border-box; }
body { margin: 0; font: 12px/16px "Open Sans", "Noto Sans", sans-serif; letter-spacing: -0.3px; color: #444; background: #fff; overflow: hidden; }
svg { display: block; flex: none; overflow: visible; }
svg text { letter-spacing: 0; }
.app { width: 1366px; height: 768px; display: flex; flex-direction: column; overflow: hidden; }
.titlebar { height: 25px; display: grid; grid-template-columns: 610px 1fr 156px; }
.quick { display: flex; }
.title { margin: 0; font-size: 12px; font-weight: 400; line-height: 26px; white-space: nowrap; letter-spacing: -0.36px; }
.logo-letter { fill: #fff; font-family: "Open Sans", sans-serif; font-weight: 700; }
.tabs { height: 25px; border-bottom: 1px solid #d4d4d4; display: flex; line-height: 25px; }
.tab { white-space: nowrap; flex: none; letter-spacing: -0.4px; }
.file { width: 59px; background: #d24726; color: #fff; text-align: center; height: 25px; margin-right: 4px; }
.home { width: 62px; margin-right: 14px; height: 25px; background: #fff; color: #d24726; text-align: center; border: 1px solid #d4d4d4; border-bottom: 0; line-height: 24px; }
.t-ins { width: 68px; }
.t-des { width: 69px; }
.t-tra { width: 103px; }
.t-ani { width: 102px; }
.t-sli { width: 96px; }
.t-rev { width: 69px; }
.signin { margin-left: auto; width: 43px; }
.ribbon { height: 93px; border-bottom: 1px solid #d4d4d4; display: flex; }
.group { height: 84px; margin-top: 3px; border-right: 1px solid #e1e1e1; display: flex; flex-direction: column; flex: none; }
.g-clip { width: 158px; }
.g-slides { width: 127px; }
.g-font { width: 228px; }
.g-para { width: 315px; }
.g-draw { width: 349px; }
.g-edit { width: 92px; padding-left: 6px; }
.tools { display: flex; height: 74px; white-space: nowrap; flex: none; }
.tools.stack { display: block; }
.stack { padding-top: 4px; }
.row { display: flex; align-items: center; }
.big { display: flex; flex-direction: column; align-items: center; text-align: center; }
.big > .caret { margin-top: 6px; }
.big > span { margin-top: 1px; }
.cmd { height: 23px; display: flex; align-items: center; letter-spacing: -0.4px; }
.g-clip .cmd span, .g-draw .cmd span { margin-left: -1px; }
.g-slides .cmd svg { margin-left: -1px; margin-right: 1px; }
.g-para .col { margin-left: 2px; }
.g-para .cmd { gap: 1px; }
.g-clip .cmd .copy { margin-right: 8px; }
.replace { margin-right: 6px; }
.cmd .caret { margin-left: 3px; }
.caret { display: inline-block; border: 3px solid transparent; border-top-color: currentColor; border-bottom: 0; vertical-align: middle; }
.off { color: #a0a0a0; fill: #aaa; }
.off text { font-family: "Open Sans", sans-serif; font-weight: 600; }
.off .heavy { font-weight: 700; }
.off .ital { font: italic 700 35px "Liberation Serif", serif; }
.sep { fill: #e1e1e1; }
.combo { height: 23px; border: 1px solid #d9d9d9; display: flex; align-items: center; justify-content: space-between; padding: 0 4px 0 2px; color: #aaa; }
.face { width: 105px; margin-left: 4px; justify-content: flex-end; }
.size { width: 41px; margin-left: -1px; margin-right: 1px; }
.glabel { display: flex; align-items: center; color: #666; height: 14px; flex: none; }
.glabel span { flex: 1; text-align: center; letter-spacing: -0.2px; }
.launch { margin-right: 3px; margin-left: 3px; }
.gallery { margin: 3px 0 0 5px; }
.arrange { margin-left: 2px; }
.collapse { margin: 81px 0 0 77px; }
.work { height: 563px; display: grid; grid-template-columns: 208px 1fr 17px; background: linear-gradient(#fefefe, #f0f0f0 75%); }
.pane { display: flex; border-right: 1px solid #d0d0d0; height: 563px; overflow: hidden; }
.thumbs { list-style: none; margin: 0; padding: 18px 0 0; width: 188px; }
.thumbs li { display: flex; height: 99px; }
.thumbs b { width: 26px; padding: 0 0 0 11px; font: 16px/16px "Open Sans", sans-serif; margin-top: -3px; }
.thumbs .sel b { color: #d24726; width: 24px; margin-top: -1px; }
.thumbs .sel { margin-top: -2px; height: 101px; }
.page { fill: #fff; stroke: #c4c4c4; stroke-width: 3; }
.fr { fill: #f1f1f1; stroke: #000; stroke-width: 3; }
.k { fill: none; stroke: #000; stroke-width: 3; }
.w { fill: #fff; }
.bl { fill: none; stroke: #41719c; stroke-width: 2.5; }
.arrow { fill: none; stroke: #5b9bd5; stroke-width: 2.5; }
.gr { fill: #70ad47; stroke: #41719c; stroke-width: 3; }
.thumb text { font-family: Lato, sans-serif; fill: #111; }
.thumb .tiny text { font-size: 7px; fill: #333; }
.thumb .tiny g text { fill: #3d8b22; }
.sb { fill: #fff; stroke: #ababab; }
.pscroll { margin-top: 2px; }
.stage { padding: 4px 0 0 6px; border-bottom: 1px solid #d4d4d4; height: 561px; }
.hruler { margin-left: 127px; }
.rnum text { font: 11.5px "Open Sans", sans-serif; fill: #555; text-anchor: middle; }
.board { display: flex; gap: 110px; margin-top: 17px; }
.vruler { margin-top: 1px; }
.body { font: 16.2px Lato, sans-serif; fill: #000; }
.nav { font: 9.3px Lato, sans-serif; fill: #000; }
.brand { font: 24.7px "Liberation Serif", serif; fill: #000; }
.status { height: 22px; background: #d24726; color: #fff; display: flex; line-height: 22px; white-space: nowrap; flex: none; }
.status span { flex: none; }
.s-slide { padding-left: 7px; width: 87px; letter-spacing: -0.55px; }
.s-lang { margin-left: 4px; letter-spacing: -0.78px; }
.push { margin-left: auto; }
.s-notes { width: 54px; letter-spacing: -0.75px; }
.s-com { width: 81px; padding-left: 1px; letter-spacing: -0.85px; }
.normal { background: #b63a1d; }
.s-zoom { width: 38px; padding-left: 6px; letter-spacing: -0.6px; }
.taskbar { height: 40px; display: flex; background: linear-gradient(#d8928a, transparent 4px), linear-gradient(90deg, #b4b4b4 0, #c0c0c0 110px, #fff 440px, #fafafa 700px, #ededed 830px, #f2f2f2 865px, #fff 900px, #fff 940px, #f5f5f5 980px, #fdfdfd 1110px, #c5c5c5 1145px, #bdbdbd 1366px); border-top: 1px solid #6d3c36; }
.tb { height: 39px; border: 1px solid #777; border-radius: 3px; background: linear-gradient(120deg, #fff, #f3f3f3); flex: none; overflow: hidden; }
.chrome { width: 51px; }
.notes, .ctl, .adobe, .spot { width: 60px; margin-right: 2px; }
.notes { margin-left: 1px; }
.ppt { width: 54px; }
.word { width: 52px; margin-left: 3px; }
.spot { margin-left: 1px; }
.edge { width: 4px; height: 39px; border: 1px solid #999; border-left: 0; border-radius: 0 3px 3px 0; background: #eee; flex: none; }
.last { width: 5px; }
.lang { margin: 9px 0 0 auto; width: 21px; color: #f4f4ea; }
.clock { width: 65px; text-align: center; color: #fff; line-height: 17px; padding: 3px 6px 0 0; letter-spacing: -0.5px; }
.desk { width: 15px; border: 1px solid #888; background: linear-gradient(145deg, #aaa, #eee 45%, #999 50%, #ccc); }
```
